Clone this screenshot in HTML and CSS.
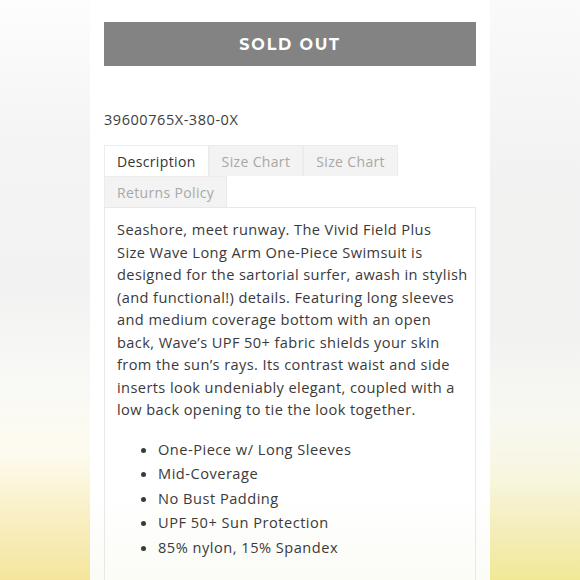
FILE: index.html
```html
<!DOCTYPE html>
<html>
<head>
<meta charset="utf-8">
<link rel="stylesheet" href="styles.css">
</head>
<body>
<div class="page">
  <div class="side side-left"></div>
  <main class="column">
    <div class="sold-out">SOLD OUT</div>
    <div class="sku">39600765X-380-0X</div>
    <div class="tabs">
      <div class="tab active">Description</div>
      <div class="tab">Size Chart</div>
      <div class="tab">Size Chart</div>
      <div class="tab">Returns Policy</div>
    </div>
    <div class="panel">
      <p class="desc">Seashore, meet runway. The Vivid Field Plus<br>
Size Wave Long Arm One-Piece Swimsuit is<br>
designed for the sartorial surfer, awash in stylish<br>
(and functional!) details. Featuring long sleeves<br>
and medium coverage bottom with an open<br>
back, Wave’s UPF 50+ fabric shields your skin<br>
from the sun’s rays. Its contrast waist and side<br>
inserts look undeniably elegant, coupled with a<br>
low back opening to tie the look together.</p>
      <ul class="features">
        <li>One-Piece w/ Long Sleeves</li>
        <li>Mid-Coverage</li>
        <li>No Bust Padding</li>
        <li>UPF 50+ Sun Protection</li>
        <li>85% nylon, 15% Spandex</li>
      </ul>
    </div>
  </main>
  <div class="side side-right"></div>
</div>
</body>
</html>
```
FILE: styles.css
```css
html, body {
  margin: 0;
  padding: 0;
  height: 100%;
}
body {
  font-family: "Open Sans", "DejaVu Sans", sans-serif;
  color: #3a3a3a;
  background: #fff;
}
.page {
  display: flex;
  height: 580px;
  overflow: hidden;
}
.side {
  width: 90px;
  flex: none;
}
.side-left {
  background: linear-gradient(to bottom, #fdfdfd 0%, #f4f4f4 25%, #f2f2f2 50%, #f9f9f6 66%, #fdfbef 78%, #f9f0c8 88%, #f5e59c 100%);
}
.side-right {
  background: linear-gradient(to bottom, #fafafa 0%, #f2f2f2 30%, #f2f2f1 58%, #f8f8f2 72%, #f8f6e0 82%, #f4edb8 92%, #f1e896 100%);
}
.column {
  width: 372px;
  flex: none;
  padding: 22px 14px 0;
  background: linear-gradient(to bottom, #ffffff 0%, #ffffff 85%, #fbfcf6 100%);
}
.sold-out {
  height: 44px;
  background: #838383;
  color: #fff;
  font-family: "Montserrat", "DejaVu Sans", sans-serif;
  font-weight: bold;
  font-size: 16px;
  letter-spacing: 1.8px;
  display: flex;
  align-items: center;
  justify-content: center;
}
.sku {
  margin-top: 43px;
  font-size: 14.5px;
  line-height: 22px;
  letter-spacing: 0.55px;
  color: #3c3c3c;
}
.tabs {
  margin-top: 14px;
  display: flex;
  flex-wrap: wrap;
  width: 300px;
}
.tab {
  box-sizing: border-box;
  height: 31px;
  padding: 0 12px;
  display: flex;
  align-items: center;
  font-size: 14px;
  letter-spacing: 0.35px;
  color: #a8a8a8;
  background: #f3f3f3;
  border: 1px solid #ececec;
  border-bottom: none;
}
.tab.active {
  background: #fff;
  color: #333;
}
.panel {
  border: 1px solid #e8e8e8;
  padding: 10px 12px 20px;
  min-height: 400px;
}
.desc {
  margin: 0;
  font-size: 14.6px;
  line-height: 22.5px;
  letter-spacing: 0.4px;
  white-space: nowrap;
  color: #3a3a3a;
}
.features {
  margin: 16px 0 0;
  padding-left: 41px;
  font-size: 14.6px;
  line-height: 24.5px;
  letter-spacing: 0.5px;
  color: #3a3a3a;
}
```
